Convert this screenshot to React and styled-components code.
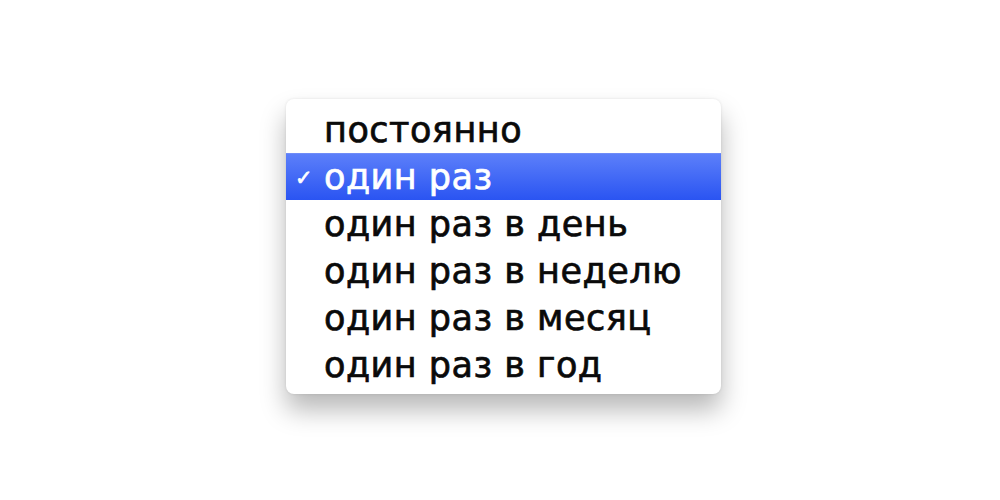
import React from 'react';
import styled, { createGlobalStyle } from 'styled-components';

const Global = createGlobalStyle`
  html, body { margin: 0; padding: 0; background: #fff; }
  body { font-family: "DejaVu Sans", "Liberation Sans", sans-serif; }
`;

const Page = styled.div`
  width: 1000px;
  height: 500px;
  display: flex;
  justify-content: center;
  align-items: flex-start;
  padding-top: 99px;
  box-sizing: border-box;
`;

const Menu = styled.ul`
  list-style: none;
  margin: 0 0 0 7px;
  padding: 7px 0 6px;
  width: 435px;
  background: #fff;
  border-radius: 8px;
  box-shadow: 0 16px 26px rgba(0, 0, 0, 0.28), 0 0 3px rgba(0, 0, 0, 0.1);
`;

const Item = styled.li`
  position: relative;
  height: 47px;
  display: flex;
  align-items: center;
  padding-left: 38px;
  font-size: 35px;
  letter-spacing: 0.5px;
  -webkit-text-stroke: 0.7px currentColor;
  color: ${(p) => (p.$selected ? '#fff' : '#0a0a0a')};
  background: ${(p) => (p.$selected ? 'linear-gradient(#5d80fa, #2a54f2)' : 'transparent')};
  box-shadow: ${(p) => (p.$selected ? 'inset 0 1px 0 #6f8cf8' : 'none')};
`;

const Check = styled.span`
  position: absolute;
  left: 9px;
  top: 50%;
  transform: translateY(-45%);
  font-size: 21px;
  font-weight: bold;
`;

const items = [
  'постоянно',
  'один раз',
  'один раз в день',
  'один раз в неделю',
  'один раз в месяц',
  'один раз в год',
];

export default function App() {
  return (
    <>
      <Global />
      <Page>
        <Menu>
          {items.map((t, i) => (
            <Item key={t} $selected={i === 1}>
              {i === 1 && <Check>✓</Check>}
              {t}
            </Item>
          ))}
        </Menu>
      </Page>
    </>
  );
}
